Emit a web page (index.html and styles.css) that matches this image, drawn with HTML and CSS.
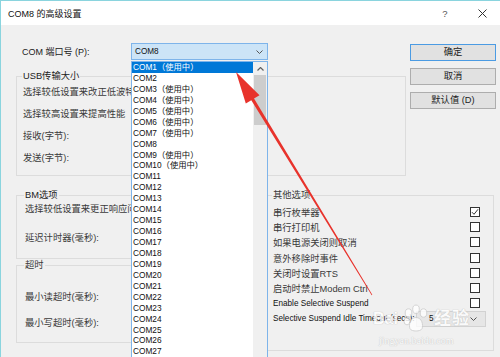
FILE: index.html
```html
<!DOCTYPE html>
<html>
<head>
<meta charset="utf-8">
<title>COM8 的高级设置</title>
<link rel="stylesheet" href="styles.css">
</head>
<body>
<div class="window">
  <div class="titlebar">
    <span class="title">COM8 的高级设置</span>
    <span class="help">?</span>
    <span class="close"><svg width="9" height="9" viewBox="0 0 9 9"><path d="M0.5 0.5 L8.5 8.5 M8.5 0.5 L0.5 8.5" stroke="#333" stroke-width="1" fill="none"/></svg></span>
  </div>
  <div class="client">
    <div class="top">
      <div class="port-row">
        <span class="port-label">COM 端口号 (P):</span>
        <div class="combo active">
          <span class="en">COM8</span>
          <svg class="chev" width="7" height="4" viewBox="0 0 7 4"><path d="M0.5 0.5 L3.5 3.5 L6.5 0.5" stroke="#555" fill="none"/></svg>
        </div>
      </div>
      <fieldset class="group usb">
        <legend>USB传输大小</legend>
        <div class="rows usb-rows">
          <div class="row soft">选择较低设置来改正低波特率下的性能问题。</div>
          <div class="row soft">选择较高设置来提高性能</div>
          <div class="row soft">接收(字节):</div>
          <div class="row soft">发送(字节):</div>
        </div>
      </fieldset>
    </div>
    <div class="buttons">
      <button class="btn default">确定</button>
      <button class="btn">取消</button>
      <button class="btn">默认值 (D)</button>
    </div>
    <div class="lower">
      <div class="lower-left">
        <fieldset class="group bm">
          <legend>BM选项</legend>
          <div class="rows bm-rows">
            <div class="row soft">选择较低设置来更正响应问题。</div>
            <div class="row soft">延迟计时器(毫秒):</div>
          </div>
        </fieldset>
        <fieldset class="group timeout">
          <legend class="soft">超时</legend>
          <div class="rows to-rows">
            <div class="row soft">最小读超时(毫秒):</div>
            <div class="row soft">最小写超时(毫秒):</div>
          </div>
        </fieldset>
      </div>
      <fieldset class="group other">
        <legend class="soft">其他选项</legend>
        <div class="opts">
          <div class="opt"><span class="soft">串行枚举器</span><span class="check"><svg width="8" height="8" viewBox="0 0 8 8"><path d="M1 4.2 L3 6.3 L7 1.3" stroke="#333" stroke-width="1" fill="none"/></svg></span></div>
          <div class="opt"><span class="soft">串行打印机</span><span class="check"></span></div>
          <div class="opt"><span class="soft">如果电源关闭则取消</span><span class="check"></span></div>
          <div class="opt"><span class="soft">意外移除时事件</span><span class="check"></span></div>
          <div class="opt"><span class="soft">关闭时设置RTS</span><span class="check"></span></div>
          <div class="opt"><span class="soft">启动时禁止Modem Ctrl</span><span class="check"></span></div>
          <div class="opt"><span class="en">Enable Selective Suspend</span><span class="check"></span></div>
          <div class="opt"><span class="en">Selective Suspend Idle Timeout (secs):</span>
            <div class="combo small"><span class="en">5</span><svg class="chev" width="7" height="4" viewBox="0 0 7 4"><path d="M0.5 0.5 L3.5 3.5 L6.5 0.5" stroke="#555" fill="none"/></svg></div>
          </div>
        </div>
      </fieldset>
    </div>
  </div>

  <div class="dropdown">
    <ul class="list">
      <li class="item sel">COM1（使用中）</li>
      <li class="item">COM2</li>
      <li class="item">COM3（使用中）</li>
      <li class="item">COM4（使用中）</li>
      <li class="item">COM5（使用中）</li>
      <li class="item">COM6（使用中）</li>
      <li class="item">COM7（使用中）</li>
      <li class="item">COM8</li>
      <li class="item">COM9（使用中）</li>
      <li class="item">COM10（使用中）</li>
      <li class="item">COM11</li>
      <li class="item">COM12</li>
      <li class="item">COM13</li>
      <li class="item">COM14</li>
      <li class="item">COM15</li>
      <li class="item">COM16</li>
      <li class="item">COM17</li>
      <li class="item">COM18</li>
      <li class="item">COM19</li>
      <li class="item">COM20</li>
      <li class="item">COM21</li>
      <li class="item">COM22</li>
      <li class="item">COM23</li>
      <li class="item">COM24</li>
      <li class="item">COM25</li>
      <li class="item">COM26</li>
      <li class="item">COM27</li>
    </ul>
    <div class="vscroll">
      <div class="sb-up"><svg width="7" height="4" viewBox="0 0 7 4"><path d="M0.5 3.5 L3.5 0.5 L6.5 3.5" stroke="#606060" stroke-width="1.2" fill="none"/></svg></div>
      <div class="sb-thumb"></div>
    </div>
  </div>

  <div class="watermark">
    <div class="wm-logo"><span>Bai</span><svg class="paw" width="30" height="32" viewBox="0 0 20 20"><g fill="#fff" stroke="#c8c8c8" stroke-width="0.6"><ellipse cx="5" cy="6" rx="2.2" ry="2.8"/><ellipse cx="10" cy="3.5" rx="2.2" ry="2.8"/><ellipse cx="15" cy="6" rx="2.2" ry="2.8"/><ellipse cx="4" cy="11.5" rx="2" ry="2.4"/><path d="M10 9 C6 9 5 14 6 16.5 C7 18.5 13 18.5 14 16.5 C15 14 14 9 10 9 Z"/></g></svg><span class="wm-zh">经验</span></div>
    <div class="wm-url">jingyan.baidu.com</div>
  </div>

  <svg class="arrow" width="500" height="357" viewBox="0 0 500 357">
    <polygon points="236,72 259.5,95.2 254,98.5 372.3,294.8 371.7,295.2 251.3,100.2 245.8,103.5" fill="#e8332c"/>
  </svg>
</div>
</body>
</html>
```

FILE: styles.css
```css
* { box-sizing: border-box; }
html, body { margin: 0; padding: 0; }
body {
  width: 500px;
  height: 357px;
  overflow: hidden;
  background: #f0f0f0;
  font-family: "Liberation Sans", "Noto Sans CJK SC", sans-serif;
  font-size: 9.3px;
  color: #222;
}
.window {
  position: relative;
  width: 500px;
  height: 357px;
  border-top: 1px solid #8ad4de;
  border-left: 1px solid #8ad4de;
  display: flex;
  flex-direction: column;
  overflow: hidden;
}
.titlebar {
  flex: none;
  height: 24px;
  background: #fff;
  display: flex;
  align-items: center;
  padding-left: 7px;
}
.title { flex: 1; font-size: 9px; color: #111; }
.help { width: 20px; text-align: center; margin-right: 17px; color: #555; font-size: 9.5px; }
.close { width: 20px; display: flex; justify-content: center; margin-right: 8px; }

.client {
  flex: 1;
  display: grid;
  grid-template-columns: 390px 90px;
  grid-template-rows: auto 1fr;
  align-content: start;
  padding-left: 15px;
}
.top { grid-column: 1; grid-row: 1; padding-top: 18px; }
.port-row {
  display: grid;
  grid-template-columns: 115px 137px;
  height: 17px;
  align-items: center;
}
.port-label { padding-left: 6px; font-size: 9px; color: #222; }
.combo {
  height: 17px;
  border: 1px solid #7eb4ea;
  background: #cce4f7;
  display: flex;
  align-items: center;
  justify-content: space-between;
  padding: 0 4px 0 3px;
}
.combo.small {
  flex: none;
  width: 70px;
  height: 16px;
  margin-right: -6px;
  background: #e6e6e6;
  border-color: #d2d2d2;
  padding: 0 8px 0 12px;
}
.en { font-size: 8.2px; font-family: "Liberation Sans", sans-serif; color: #111; }

.group {
  margin: 0;
  padding: 0 0 0 6px;
  border: 1px solid #dcdcdc;
  min-width: 0;
}
legend {
  padding: 0 1px;
  margin-left: -1px;
  line-height: 12px;
  color: #222;
}
.soft { color: #3a3a3a; }
.rows { display: flex; flex-direction: column; }
.row { line-height: 12px; white-space: nowrap; }
.usb { margin-top: 10px; height: 106px; }
.usb-rows { padding-top: 4px; gap: 10px; }

.buttons {
  grid-column: 2;
  grid-row: 1;
  padding: 19px 0 0 4px;
  display: flex;
  flex-direction: column;
  gap: 7px;
}
.btn {
  width: 86px;
  height: 17px;
  border: 1px solid #adadad;
  background: #e1e1e1;
  font: inherit;
  color: #222;
  padding: 0;
  line-height: 15px;
}
.btn.default { border-color: #4b9be3; }

.lower {
  grid-column: 1 / -1;
  grid-row: 2;
  display: flex;
  gap: 2px;
  margin-top: 13px;
  align-items: flex-start;
}
.lower-left { flex: none; width: 249px; display: flex; flex-direction: column; }
.bm { height: 70px; padding-left: 8px; }
.bm-rows { padding-top: 2px; gap: 17px; }
.timeout { height: 84px; padding-left: 8px; }
.to-rows { padding-top: 20px; gap: 14px; }

.other { flex: none; width: 227px; height: 162px; padding: 0 13px 0 5px; }
.opts { display: flex; flex-direction: column; padding-top: 3px; }
.opt {
  height: 15.3px;
  display: flex;
  align-items: center;
  justify-content: space-between;
  white-space: nowrap;
}
.check {
  flex: none;
  width: 10px;
  height: 10px;
  border: 1px solid #333;
  background: #fff;
  display: flex;
  align-items: center;
  justify-content: center;
}

.dropdown {
  position: absolute;
  left: 130px;
  top: 60px;
  width: 137px;
  height: 300px;
  background: #fff;
  border: 1px solid #7eb4ea;
  border-bottom: none;
  display: flex;
}
.list {
  list-style: none;
  margin: 0;
  padding: 0;
  width: 121px;
  font-size: 8.3px;
}
.item {
  height: 10.95px;
  line-height: 10.95px;
  padding-left: 1px;
  white-space: nowrap;
  color: #111;
}
.item.sel { background: #0078d7; color: #fff; }
.vscroll {
  width: 14px;
  background: #f0f0f0;
  display: flex;
  flex-direction: column;
  align-items: center;
}
.sb-up { height: 13px; display: flex; align-items: center; justify-content: center; }
.sb-thumb { width: 12px; height: 50px; background: #cdcdcd; }

.watermark {
  position: absolute;
  left: 372px;
  top: 301px;
  color: #fff;
  text-shadow: 0 0 1px #bdbdbd, 0 0 1px #bdbdbd;
  opacity: 0.8;
  pointer-events: none;
}
.wm-logo {
  display: flex;
  align-items: center;
  gap: 3px;
  font-family: "Liberation Sans", "Noto Sans CJK SC", sans-serif;
  font-size: 16px;
  font-weight: bold;
  line-height: 34px;
}
.wm-zh { font-size: 17px; letter-spacing: 1px; }
.wm-url { font-family: "Liberation Serif", serif; font-size: 10px; line-height: 12px; margin-top: -1px; padding-left: 6px; }

.arrow { position: absolute; left: -1px; top: -1px; pointer-events: none; }
```
